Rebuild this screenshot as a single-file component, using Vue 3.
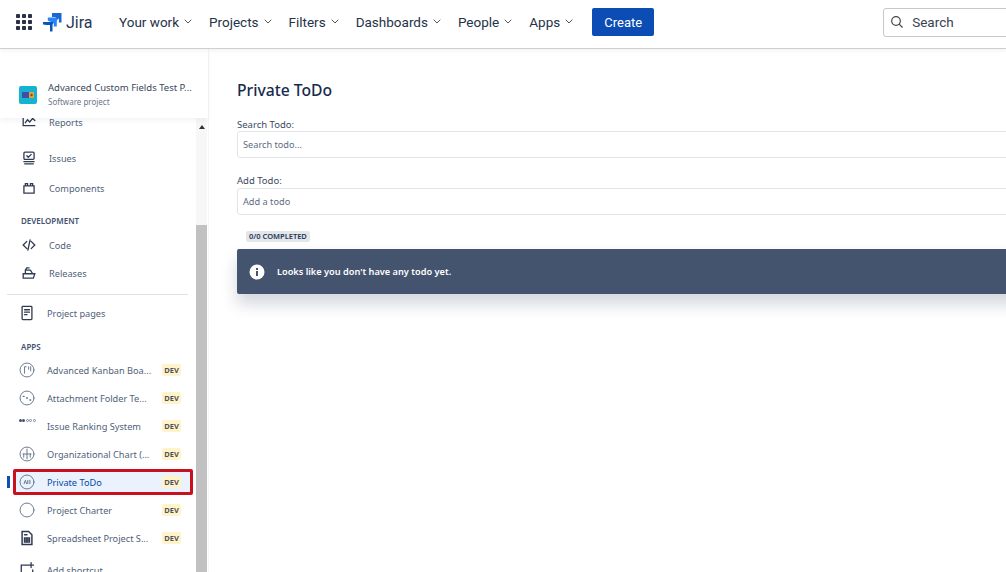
<script setup>
const nav = ['Your work', 'Projects', 'Filters', 'Dashboards', 'People', 'Apps']
const dots = [0, 1, 2].flatMap((y) => [0, 1, 2].map((x) => ({ x: x * 6 + 2, y: y * 6 + 2 })))
const icons = {
  reports: '<path d="M3 4v12h16M6 12l3-4 3 3 4-5 3 3" />',
  issues: '<rect x="4" y="3" width="14" height="10" rx="1.5"/><path d="M8 8l2 2 4-4M4 16h14M5 19h12"/>',
  components: '<path d="M4 8h14v10H4zM6 8V5h3v3M13 8V5h3v3"/>',
  code: '<path d="M8 6l-5 5 5 5M14 6l5 5-5 5M12.500 4l-3 14"/>',
  releases: '<path d="M3 12h16l-2 6H3zM6 12V7h7l3 5M6 7l2-3h3"/>',
  pages: '<rect x="5" y="3" width="12" height="16" rx="1"/><path d="M8 7h6M8 10h6M8 13h3"/>',
  kanban: '<circle cx="11" cy="11" r="8.500"/><path d="M8 15V7h2M13 7v3M15.500 7v5"/>',
  folder: '<circle cx="11" cy="11" r="8.500"/><path d="M6.500 9h1M10.500 11h1M14.500 13.500h1" stroke-width="1.700"/>',
  org: '<circle cx="11" cy="11" r="8.500"/><path d="M11 5v12M6 11h10M7 15v-4M15 15v-4"/>',
  todo: '<circle cx="11" cy="11" r="8.500"/><path d="M7.500 13l1.500-4 1.500 4M12 9v4M14.500 9v4"/>',
  charter: '<circle cx="11" cy="11" r="8.500"/>',
  sheet: '<path d="M5 3h8l4 4v12H5z"/><path d="M8 11h6v5H8zM11 11v5M8 13.500h6M8 7h3"/>',
  add: '<path d="M14 5H4v14h14v-8M16 2v6M13 5h6"/>',
}
const topRows = [
  { label: 'Issues', icon: 'issues' },
  { label: 'Components', icon: 'components' },
]
const devRows = [
  { label: 'Code', icon: 'code' },
  { label: 'Releases', icon: 'releases' },
]
const apps = [
  { label: 'Advanced Kanban Boa...', icon: 'kanban' },
  { label: 'Attachment Folder Te...', icon: 'folder' },
  { label: 'Issue Ranking System', icon: 'rank' },
  { label: 'Organizational Chart (...', icon: 'org' },
  { label: 'Private ToDo', icon: 'todo', active: true },
  { label: 'Project Charter', icon: 'charter' },
  { label: 'Spreadsheet Project S...', icon: 'sheet' },
]
</script>

<template>
  <div class="page">
    <header class="topbar">
      <svg class="grid" width="16" height="16" viewBox="0 0 16 16">
        <rect v-for="d in dots" :key="d.x + '-' + d.y" :x="d.x - 2" :y="d.y - 2" width="4" height="4" rx="0.800" fill="#2b3245" />
      </svg>
      <div class="logo">
        <svg width="19" height="19" viewBox="0 0 19 19">
          <path d="M9 0h9.500v9.500h-2.600V5.200L8 12.800V10.500L13 4H9z" fill="#1a67d2" />
          <path d="M4.800 4.500h9v9h-3V9.500H9L4.800 7.500z" fill="#2684ff" />
          <path d="M0 9h9.500v9.500H7V12H3.500L0 11.500z" fill="#0c55b8" />
        </svg>
        <span>Jira</span>
      </div>
      <nav class="nav">
        <a v-for="n in nav" :key="n" class="nav-item">
          {{ n }}
          <svg width="8" height="5" viewBox="0 0 8 5"><path d="M.7.7L4 4l3.300-3.300" fill="none" stroke="#555" stroke-width="1" /></svg>
        </a>
      </nav>
      <button class="create">Create</button>
      <div class="search">
        <svg width="14" height="14" viewBox="0 0 14 14"><circle cx="6" cy="6" r="4.300" fill="none" stroke="#444" stroke-width="1.200" /><path d="M9.200 9.200l3.300 3.300" stroke="#444" stroke-width="1.200" /></svg>
        <span>Search</span>
      </div>
    </header>

    <div class="body">
      <aside class="sidebar">
        <div class="project">
          <svg class="project-icon" width="18" height="18" viewBox="0 0 18 18">
            <rect width="18" height="18" rx="2" fill="#17b2cf" />
            <rect x="3" y="6" width="8" height="6" fill="#3f4fa8" />
            <rect x="10" y="6" width="5" height="6" fill="#d8a63a" />
            <circle cx="12.500" cy="9" r="1.200" fill="#9a3f2a" />
          </svg>
          <div>
            <div class="project-name">Advanced Custom Fields Test P...</div>
            <div class="project-type">Software project</div>
          </div>
        </div>

        <div class="scroll-area">
          <div class="list">
            <div class="list-inner">
              <div class="row row-reports">
                <svg class="ic top" viewBox="0 0 22 22" v-html="icons.reports"></svg>
                <span class="row-text tight">Reports</span>
              </div>
              <div v-for="r in topRows" :key="r.label" class="row row-gap">
                <svg class="ic top" viewBox="0 0 22 22" v-html="icons[r.icon]"></svg>
                <span class="row-text tight">{{ r.label }}</span>
              </div>
              <div class="heading heading-dev">DEVELOPMENT</div>
              <div v-for="r in devRows" :key="r.label" class="row">
                <svg class="ic top" viewBox="0 0 22 22" v-html="icons[r.icon]"></svg>
                <span class="row-text tight">{{ r.label }}</span>
              </div>
              <div class="divider"></div>
              <div class="row">
                <svg class="ic" viewBox="0 0 22 22" v-html="icons.pages"></svg>
                <span class="row-text">Project pages</span>
              </div>
              <div class="heading heading-apps">APPS</div>
              <div v-for="a in apps" :key="a.label" class="row app" :class="{ active: a.active }">
                <span v-if="a.icon === 'rank'" class="rank"><i></i><i></i><b></b><b></b><b></b></span>
                <svg v-else class="ic" :class="{ sheet: a.icon === 'sheet' }" viewBox="0 0 22 22" v-html="icons[a.icon]"></svg>
                <span class="row-text">{{ a.label }}</span>
                <span class="dev">DEV</span>
              </div>
              <div class="row row-add">
                <svg class="ic" viewBox="0 0 22 22" v-html="icons.add"></svg>
                <span class="row-text">Add shortcut</span>
              </div>
            </div>
          </div>
          <div class="scrollbar">
            <div class="arrow"></div>
            <div class="thumb"></div>
          </div>
        </div>
      </aside>

      <main class="content">
        <h1>Private ToDo</h1>
        <label class="field-label first">Search Todo:</label>
        <div class="input input-search">Search todo...</div>
        <label class="field-label second">Add Todo:</label>
        <div class="input input-add">Add a todo</div>
        <span class="completed">0/0 COMPLETED</span>
        <div class="banner">
          <svg width="16" height="16" viewBox="0 0 16 16">
            <circle cx="8" cy="8" r="7.500" fill="#fff" />
            <rect x="7" y="7" width="2" height="5" fill="#44546f" />
            <rect x="7" y="4" width="2" height="2" fill="#44546f" />
          </svg>
          <span>Looks like you don't have any todo yet.</span>
        </div>
      </main>
    </div>
  </div>
</template>

<style>
html, body { margin: 0; overflow: hidden; background: #fff; }
</style>

<style scoped>
.page {
  width: 1006px;
  height: 572px;
  overflow: hidden;
  display: flex;
  flex-direction: column;
  font-family: "Noto Sans", sans-serif;
  color: #42526e;
}
.topbar {
  height: 44px;
  flex: none;
  display: flex;
  align-items: center;
  padding: 0 0 4px 16px;
  box-sizing: content-box;
  border-bottom: 1px solid #cfcfd2;
  box-shadow: 0 2px 4px rgba(0, 0, 0, 0.05);
  font-family: Roboto, sans-serif;
  position: relative;
  z-index: 2;
  background: #fff;
}
.grid { flex: none; }
.logo {
  display: flex;
  align-items: center;
  gap: 4px;
  margin-left: 11px;
  font-size: 16px;
  color: #253858;
  width: 76px;
  flex: none;
}
.nav { display: flex; gap: 17px; }
.nav-item {
  display: flex;
  align-items: center;
  gap: 5px;
  font-size: 13.500px;
  line-height: 16px;
  padding-bottom: 1px;
  color: #253247;
  white-space: nowrap;
}
.create {
  margin-left: 19px;
  width: 62px;
  height: 28px;
  flex: none;
  background: #0b4db4;
  color: #fff;
  border: 0;
  border-radius: 2px;
  font-family: Roboto, sans-serif;
  font-size: 13px;
  font-weight: 400;
  padding: 0;
}
.search {
  margin-left: 229px;
  width: 160px;
  height: 27px;
  flex: none;
  border: 1px solid #c8c8c8;
  border-radius: 3px;
  display: flex;
  align-items: center;
  gap: 8px;
  padding-left: 6px;
  font-size: 13.500px;
  color: #3a4252;
}
.body {
  flex: 1;
  display: flex;
  min-height: 0;
}
.sidebar {
  width: 209px;
  flex: none;
  display: flex;
  flex-direction: column;
  border-right: 1px solid #f4f5f7;
  box-sizing: border-box;
}
.project {
  height: 69px;
  flex: none;
  display: flex;
  align-items: center;
  gap: 11px;
  padding: 23px 0 0 19px;
  box-sizing: border-box;
  box-shadow: 0 3px 5px rgba(9, 30, 66, 0.05);
  position: relative;
  z-index: 1;
  background: #fff;
}
.project-icon { flex: none; }
.project-name {
  font-size: 9.500px;
  color: #3a4660;
  white-space: nowrap;
  line-height: 14px;
}
.project-type {
  font-size: 8px;
  color: #6b778c;
  line-height: 14px;
}
.scroll-area {
  flex: 1;
  display: flex;
  min-height: 0;
  padding-right: 1px;
}
.list {
  width: 196px;
  flex: none;
  overflow: hidden;
}
.list-inner { margin-top: -10px; }
.row {
  height: 28px;
  display: flex;
  align-items: center;
  padding-left: 18px;
  font-size: 9.200px;
  color: #505f79;
}
.row-gap { margin-top: 8px; }
.row-gap + .row-gap { margin-top: 2px; }
.ic {
  width: 18px;
  height: 18px;
  flex: none;
  fill: none;
  stroke: #303a50;
  stroke-width: 1.600;
  stroke-linecap: round;
}
.ic.top {
  width: 16px;
  height: 16px;
  margin-left: 3px;
  stroke-width: 1.800;
}
.app .ic {
  stroke: #5e6c84;
  stroke-width: 1.100;
}
.app .ic.sheet {
  stroke: #303a50;
  stroke-width: 1.800;
}
.row-text {
  margin-left: 11px;
  white-space: nowrap;
}
.row-text.tight { margin-left: 12px; }
.heading {
  margin-left: 21px;
  font-size: 8px;
  font-weight: 600;
  color: #42526e;
  line-height: 10px;
}
.heading-dev { margin-top: 14px; margin-bottom: 5px; }
.heading-apps { margin-top: 15px; margin-bottom: 4px; }
.divider {
  height: 1px;
  background: #dfe1e6;
  margin: 7px 8px 4px 7px;
}
.app { position: relative; }
.dev {
  position: absolute;
  left: 162px;
  top: 8px;
  width: 19px;
  height: 12px;
  background: #fff4c9;
  border-radius: 2px;
  font-size: 7.500px;
  font-weight: 700;
  line-height: 12px;
  text-align: center;
  color: #50505a;
}
.rank {
  width: 18px;
  height: 18px;
  flex: none;
  display: flex;
  gap: 0.500px;
  margin-top: -12px;
  align-items: center;
  justify-content: center;
}
.rank i, .rank b {
  width: 3px;
  height: 3px;
  border-radius: 50%;
  box-sizing: border-box;
}
.rank i { background: #42526e; }
.rank b { border: 0.700px solid #7a869a; }
.active .row-text { color: #0747a6; }
.active::before {
  content: "";
  position: absolute;
  left: 7px;
  top: 8px;
  width: 3px;
  height: 12px;
  background: #0c4fb5;
}
.active::after {
  content: "";
  position: absolute;
  left: 13px;
  top: 1px;
  width: 180px;
  height: 26px;
  box-sizing: border-box;
  border: 3px solid #c8101e;
  border-radius: 2px;
  background: #e9f2fd;
  z-index: -1;
}
.active { z-index: 0; }
.row-add { margin-top: 2px; padding-top: 2px; }
.scrollbar {
  width: 11px;
  flex: none;
  background: #f7f7f7;
  display: flex;
  flex-direction: column;
}
.arrow {
  width: 0;
  height: 0;
  margin: 7px auto 0;
  border-left: 3.500px solid transparent;
  border-right: 3.500px solid transparent;
  border-bottom: 4px solid #333;
}
.thumb {
  margin-top: 96px;
  flex: 1;
  background: #c1c1c1;
}
.content {
  flex: 1;
  min-width: 0;
  padding: 0 0 0 28px;
  display: flex;
  flex-direction: column;
  align-items: flex-start;
}
h1 {
  margin: 29px 0 0;
  font-size: 15.700px;
  font-weight: 500;
  line-height: 24px;
  color: #172b4d;
}
.field-label {
  font-size: 9.500px;
  line-height: 12px;
  color: #3b4a63;
}
.first { margin-top: 17px; }
.second { margin-top: 17px; }
.input {
  width: 800px;
  flex: none;
  box-sizing: border-box;
  border: 1px solid #e2e4e9;
  border-radius: 3px;
  padding-left: 5px;
  display: flex;
  align-items: center;
  font-size: 9.200px;
  color: #5e6c84;
}
.input-search { height: 27px; margin-top: 0; }
.input-add { height: 27px; margin-top: 1px; }
.completed {
  margin: 16px 0 0 9px;
  height: 11px;
  line-height: 11px;
  padding: 0 3px;
  background: #e4e6ea;
  border-radius: 2px;
  font-size: 7.500px;
  font-weight: 600;
  color: #253858;
}
.banner {
  margin-top: 7px;
  width: 800px;
  height: 45px;
  flex: none;
  background: #44546f;
  border-radius: 2px;
  box-shadow: 0 10px 16px rgba(9, 30, 66, 0.18);
  display: flex;
  align-items: center;
  gap: 12px;
  padding-left: 12px;
  box-sizing: border-box;
  color: #fff;
  font-size: 9.200px;
  font-weight: 600;
}
</style>
